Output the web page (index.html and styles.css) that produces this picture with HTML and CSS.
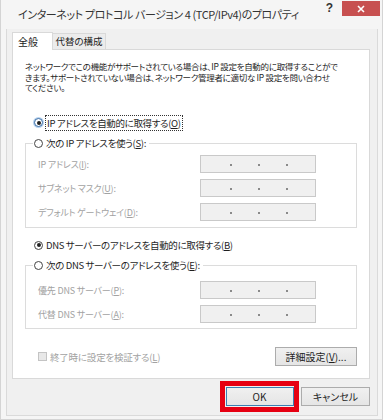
FILE: index.html
```html
<!DOCTYPE html>
<html lang="ja">
<head>
    <meta charset="UTF-8">
    <title>インターネット プロトコル バージョン 4 (TCP/IPv4)のプロパティ</title>
    <link rel="stylesheet" href="styles.css">
</head>
<body>
    <div class="window">
        <div class="titlebar">
            <span class="title">インターネット プロトコル バージョン 4 (TCP/IPv4)のプロパティ</span>
            <span class="help">?</span>
            <span class="close">
                <svg width="8" height="8" viewBox="0 0 8 8"><path d="M1 1L7 7M7 1L1 7" stroke="#fff" stroke-width="1.6"/></svg>
            </span>
        </div>

        <div class="client">
            <div class="tabs">
                <div class="tab active">全般</div>
                <div class="tab">代替の構成</div>
            </div>

            <div class="panel">
                <p class="desc">ネットワークでこの機能がサポートされている場合は、IP 設定を自動的に取得することがで<br>きます。サポートされていない場合は、ネットワーク管理者に適切な IP 設定を問い合わせ<br>てください。</p>

                <div class="option first">
                    <span class="radio checked focus"></span>
                    <span class="focus-text">IP アドレスを自動的に取得する(<u>O</u>)</span>
                </div>

                <fieldset class="group group-ip">
                    <legend><span class="radio"></span>次の IP アドレスを使う(<u>S</u>):</legend>
                    <div class="row">
                        <span class="lbl">IP アドレス(<u>I</u>):</span>
                        <span class="ipbox"><i></i><i></i><i></i></span>
                    </div>
                    <div class="row">
                        <span class="lbl">サブネット マスク(<u>U</u>):</span>
                        <span class="ipbox"><i></i><i></i><i></i></span>
                    </div>
                    <div class="row">
                        <span class="lbl">デフォルト ゲートウェイ(<u>D</u>):</span>
                        <span class="ipbox"><i></i><i></i><i></i></span>
                    </div>
                </fieldset>

                <div class="option second">
                    <span class="radio checked"></span>
                    <span>DNS サーバーのアドレスを自動的に取得する(<u>B</u>)</span>
                </div>

                <fieldset class="group group-dns">
                    <legend><span class="radio"></span>次の DNS サーバーのアドレスを使う(<u>E</u>):</legend>
                    <div class="row">
                        <span class="lbl">優先 DNS サーバー(<u>P</u>):</span>
                        <span class="ipbox"><i></i><i></i><i></i></span>
                    </div>
                    <div class="row">
                        <span class="lbl">代替 DNS サーバー(<u>A</u>):</span>
                        <span class="ipbox"><i></i><i></i><i></i></span>
                    </div>
                </fieldset>

                <div class="verify">
                    <span class="check"></span>
                    <span class="verify-text">終了時に設定を検証する(<u>L</u>)</span>
                    <button class="btn advanced">詳細設定(<u>V</u>)...</button>
                </div>
            </div>

            <div class="actions">
                <span class="mark"><button class="btn ok">OK</button></span>
                <button class="btn">キャンセル</button>
            </div>
        </div>
    </div>
</body>
</html>
```

FILE: styles.css
```css
body {
    margin: 0;
    background: #f4f4f4;
    font-family: "Noto Sans CJK JP", "Liberation Sans", sans-serif;
    font-feature-settings: "palt";
    color: #1e1e1e;
}

.window {
    width: 383px;
    height: 420px;
    box-sizing: border-box;
    border: 1px solid #d4d4d4;
    border-top: none;
    background: #f5f5f5;
    padding: 0 4px 6px 5px;
}

.titlebar {
    height: 29px;
    display: flex;
    align-items: flex-start;
}

.title {
    margin: 6px 0 0 12px;
    font-size: 11px;
    letter-spacing: -0.4px;
    line-height: 16px;
    color: #333;
    flex: 1;
    white-space: nowrap;
}

.help {
    margin: 1px 9px 0 0;
    font-family: "Liberation Sans", sans-serif;
    font-weight: bold;
    font-size: 12px;
    line-height: 14px;
    color: #333;
}

.close {
    width: 38px;
    height: 15px;
    margin-top: 1px;
    margin-right: -2px;
    background: #c75050;
    display: flex;
    align-items: center;
    justify-content: center;
}

.client {
    height: 384px;
    border: 1px solid #dadada;
    border-top: none;
    background: #f0f0f0;
    padding: 2px 7px 0 5px;
}

.tabs {
    display: flex;
    align-items: flex-end;
    height: 18px;
    position: relative;
    z-index: 1;
}

.tab {
    font-size: 9.5px;
    line-height: 15px;
    padding: 0;
    border: 1px solid #d9d9d9;
    border-bottom: none;
    background: #ececec;
    color: #222;
    text-align: center;
    box-sizing: border-box;
    height: 16px;
    white-space: nowrap;
}

.tab.active {
    width: 41px;
    height: 18.5px;
    font-size: 10px;
    background: #fff;
    text-align: left;
    padding-left: 5px;
    line-height: 18px;
    margin-bottom: -1px;
}

.tab + .tab {
    width: 53px;
    border-left: none;
}

.panel {
    height: 330px;
    border: 1px solid #d9d9d9;
    background: #fff;
    padding: 11px 12px 0 12px;
    box-sizing: border-box;
}

.desc {
    margin: 0;
    font-size: 8.5px;
    line-height: 10.5px;
    letter-spacing: -0.3px;
    white-space: nowrap;
}

.option {
    display: flex;
    align-items: center;
    height: 15px;
    margin-left: 9px;
    font-size: 9.5px;
    letter-spacing: -0.35px;
}

.option.first {
    margin-top: 22.5px;
}

.option.second {
    margin-top: 9.5px;
}

.focus-text {
    outline: 1px dotted #333;
    padding: 0 1px;
    line-height: 14px;
}

.radio {
    width: 9px;
    height: 9px;
    box-sizing: border-box;
    border: 1px solid #444;
    border-radius: 50%;
    background: #fff;
    margin-right: 3px;
    display: inline-block;
    flex: none;
    position: relative;
}

.radio.checked::after {
    content: "";
    position: absolute;
    left: 1.5px;
    top: 1.5px;
    width: 4px;
    height: 4px;
    border-radius: 50%;
    background: #222;
}

.radio.focus {
    box-shadow: 0 0 0 1px #b7d2ee;
    border-color: #3c6ea5;
}

.group {
    margin: 0;
    padding: 0 40px 0 12px;
    border: 1px solid #dcdcdc;
}

.group-ip {
    margin-top: 5px;
    padding-bottom: 6px;
}

.group-dns {
    margin-top: 4.5px;
    padding-bottom: 5px;
}

.group legend {
    font-size: 9.5px;
    letter-spacing: -0.35px;
    line-height: 16px;
    margin-left: -5px;
    padding: 0 3px 0 1px;
    display: flex;
    align-items: center;
}

.group-ip .row:first-of-type {
    margin-top: 4px;
}

.group-dns .row:first-of-type {
    margin-top: 8px;
}

.row {
    display: grid;
    grid-template-columns: 162px 116px;
    align-items: center;
    height: 18px;
    margin-top: 6px;
}

.lbl {
    font-size: 9px;
    letter-spacing: -0.2px;
    color: #a2a2a2;
    white-space: nowrap;
}

.ipbox {
    height: 18px;
    box-sizing: border-box;
    border: 1px solid #c9c9c9;
    background: #f0f0f0;
    display: flex;
    align-items: center;
    gap: 26px;
    padding: 2px 0 0 29px;
}

.ipbox i {
    width: 2px;
    height: 2px;
    background: #8a8a8a;
}

.verify {
    display: flex;
    align-items: center;
    margin: 18px 0 0 13px;
}

.check {
    width: 9px;
    height: 9px;
    box-sizing: border-box;
    border: 1px solid #c4c4c4;
    background: #e8e8e8;
    margin-right: 3px;
}

.verify-text {
    font-size: 9.5px;
    letter-spacing: -0.2px;
    color: #a2a2a2;
    flex: 1;
}

.btn {
    font-family: inherit;
    font-feature-settings: "palt";
    font-size: 10px;
    color: #1e1e1e;
    height: 19px;
    padding: 0;
    border: 1px solid #acacac;
    background: linear-gradient(#f0f0f0, #e5e5e5);
    border-radius: 0;
}

.advanced {
    width: 82px;
}

.actions {
    display: flex;
    justify-content: flex-end;
    align-items: center;
    margin-top: 2px;
}

.mark {
    border: 5px solid #e60012;
    padding: 1px 0.5px;
    display: flex;
    margin-right: 2px;
}

.ok {
    width: 68px;
    border-color: #3c7fb1;
}

.actions > .btn {
    width: 69px;
}
```
